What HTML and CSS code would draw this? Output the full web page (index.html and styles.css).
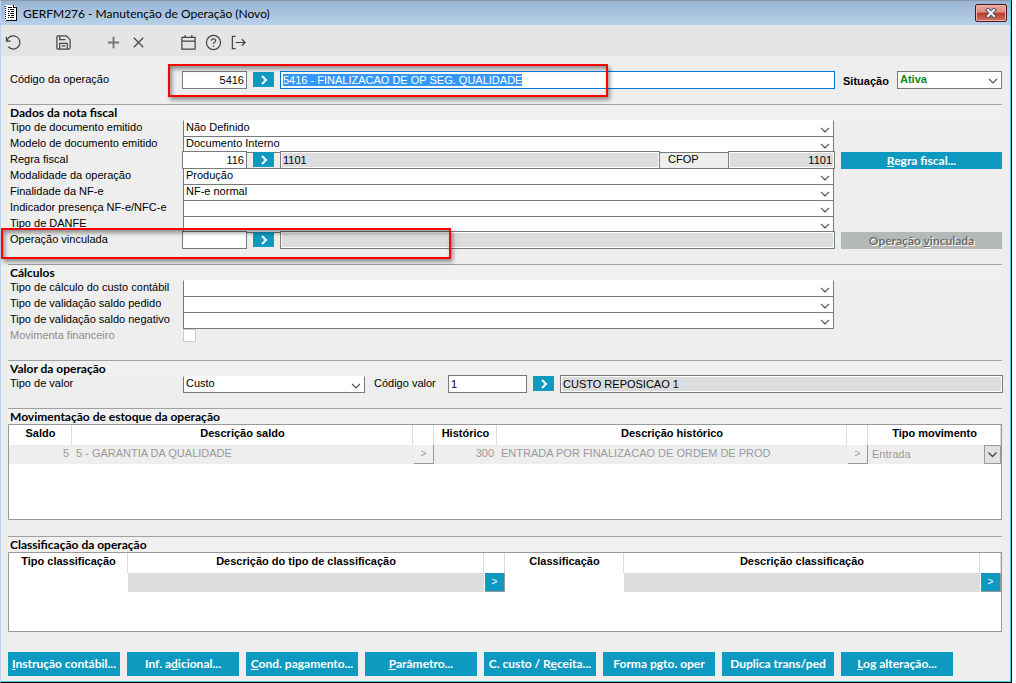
FILE: index.html
```html
<!DOCTYPE html>
<html lang="pt-BR">
<head>
    <meta charset="UTF-8">
    <meta name="viewport" content="width=device-width, initial-scale=1.0">
    <title>GERFM276 - Manutenção de Operação (Novo)</title>
    <link rel="stylesheet" href="styles.css">
</head>
<body>

    <div class="window">
        <header class="titlebar">
            <svg class="app-icon" width="12" height="16" viewBox="0 0 12 16" shape-rendering="crispEdges">
                <path fill="#fff" d="M0 0h9l2 2v13H0z"/>
                <path fill="none" stroke="#000" d="M8.500 0v2.500H11M11.500 2v13.500H1"/>
                <path stroke="#000" stroke-dasharray="1 1" d="M.5 1v14"/>
                <path stroke="#000" d="M3 2.500h4M3 4.500h1M5 4.500h4M3 6.500h2M6 6.500h3M3 8.500h1M5 8.500h4M3 10.500h2M6 10.500h3M3 12.500h1M5 12.500h4"/>
            </svg>
            <h1>GERFM276 - Manutenção de Operação (Novo)</h1>
            <button class="close" aria-label="Fechar">
                <svg width="12" height="10" viewBox="0 0 12 10">
                    <path d="M3 2l6 6M9 2l-6 6" stroke="#4a4f63" stroke-width="4" stroke-linecap="square"/>
                    <path d="M3 2l6 6M9 2l-6 6" stroke="#fff" stroke-width="2" stroke-linecap="square"/>
                </svg>
            </button>
        </header>

        <nav class="toolbar">
            <button aria-label="Desfazer"><svg viewBox="0 0 18 18"><path d="M1.500 3v4.500H6M2 7.200A7 7 0 1 1 3.500 13.500"/></svg></button>
            <button class="spaced" aria-label="Salvar"><svg viewBox="0 0 18 18"><path d="M2 3.500Q2 2 3.500 2H12l4 4v8.500q0 1.500-1.500 1.500h-11Q2 16 2 14.500zM5 2v4h6M5 16v-6h8v6M7 12.500h4"/></svg></button>
            <button class="spaced soft" aria-label="Incluir"><svg viewBox="0 0 18 18"><path d="M9 3v12M3 9h12"/></svg></button>
            <button aria-label="Excluir"><svg viewBox="0 0 18 18"><path d="M4 4l10 10M14 4L4 14"/></svg></button>
            <button class="spaced" aria-label="Agenda"><svg viewBox="0 0 18 18"><path d="M2 3.500h14v12.500H2zM2 7.500h14M5.500 1v2.500M12.500 1v2.500"/></svg></button>
            <button aria-label="Ajuda"><svg viewBox="0 0 18 18"><circle cx="9" cy="9" r="7.500"/><path d="M6.800 7.200C6.800 4.400 11.400 4.500 11.300 7.200C11.200 8.800 9 8.600 9 10.500M9 12.300v1.300"/></svg></button>
            <button aria-label="Sair"><svg viewBox="0 0 18 18"><path d="M6 2.500H2.500v13H6M6 9h10M12.500 5.500L16 9l-3.500 3.500"/></svg></button>
        </nav>

        <main>
            <div class="row head">
                <label for="codigo">Código da operação</label>
                <div class="fields">
                    <input class="code" id="codigo" value="5416">
                    <button class="go" aria-label="Buscar operação"><svg viewBox="0 0 8 10"><path d="M2 1l4 4-4 4"/></svg></button>
                    <input class="grow active" id="descricao" aria-label="Descrição da operação" value="5416 - FINALIZACAO DE OP SEG. QUALIDADE">
                </div>
                <div class="status">
                    <label for="situacao">Situação</label>
                    <select id="situacao"><option>Ativa</option></select>
                </div>
                <div class="marker marker-code"></div>
            </div>

            <section>
                <h2>Dados da nota fiscal</h2>
                <div class="row first">
                    <label for="tipoDoc">Tipo de documento emitido</label>
                    <select id="tipoDoc"><option>Não Definido</option></select>
                </div>
                <div class="row">
                    <label for="modelo">Modelo de documento emitido</label>
                    <select id="modelo"><option>Documento Interno</option></select>
                </div>
                <div class="row">
                    <label for="regra">Regra fiscal</label>
                    <div class="fields lined">
                        <input class="code" id="regra" value="116">
                        <button class="go" aria-label="Buscar regra"><svg viewBox="0 0 8 10"><path d="M2 1l4 4-4 4"/></svg></button>
                        <input class="grow" aria-label="Descrição da regra" value="1101" readonly>
                        <label class="cfop-label" for="cfop">CFOP</label>
                        <input class="cfop" id="cfop" value="1101" readonly>
                    </div>
                    <button class="action"><u>R</u>egra fiscal...</button>
                </div>
                <div class="row first">
                    <label for="modalidade">Modalidade da operação</label>
                    <select id="modalidade"><option>Produção</option></select>
                </div>
                <div class="row">
                    <label for="finalidade">Finalidade da NF-e</label>
                    <select id="finalidade"><option>NF-e normal</option></select>
                </div>
                <div class="row">
                    <label for="presenca">Indicador presença NF-e/NFC-e</label>
                    <select id="presenca"><option></option></select>
                </div>
                <div class="row">
                    <label for="danfe">Tipo de DANFE</label>
                    <select id="danfe"><option></option></select>
                </div>
                <div class="row">
                    <label for="vinculada">Operação vinculada</label>
                    <div class="fields">
                        <input class="code" id="vinculada">
                        <button class="go" aria-label="Buscar operação vinculada"><svg viewBox="0 0 8 10"><path d="M2 1l4 4-4 4"/></svg></button>
                        <input class="grow" aria-label="Descrição da operação vinculada" readonly>
                    </div>
                    <button class="action" disabled>Operação <u>v</u>inculada</button>
                    <div class="marker marker-linked"></div>
                </div>
            </section>

            <section>
                <h2>Cálculos</h2>
                <div class="row first">
                    <label for="custo">Tipo de cálculo do custo contábil</label>
                    <select id="custo"><option></option></select>
                </div>
                <div class="row">
                    <label for="pedido">Tipo de validação saldo pedido</label>
                    <select id="pedido"><option></option></select>
                </div>
                <div class="row">
                    <label for="negativo">Tipo de validação saldo negativo</label>
                    <select id="negativo"><option></option></select>
                </div>
                <div class="row">
                    <label class="off" for="financeiro">Movimenta financeiro</label>
                    <input type="checkbox" id="financeiro" disabled>
                </div>
            </section>

            <section>
                <h2>Valor da operação</h2>
                <div class="row first value">
                    <label for="tipoValor">Tipo de valor</label>
                    <select id="tipoValor"><option>Custo</option></select>
                    <label for="codigoValor">Código valor</label>
                    <div class="fields">
                        <input class="value-code" id="codigoValor" value="1">
                        <button class="go" aria-label="Buscar valor"><svg viewBox="0 0 8 10"><path d="M2 1l4 4-4 4"/></svg></button>
                        <input class="grow" aria-label="Descrição do valor" value="CUSTO REPOSICAO 1" readonly>
                    </div>
                </div>
            </section>

            <section>
                <h2>Movimentação de estoque da operação</h2>
                <div class="grid-box stock">
                    <table>
                        <colgroup><col class="c-num"><col class="c-desc"><col class="c-btn"><col class="c-num"><col><col class="c-btn"><col class="c-type"></colgroup>
                        <thead>
                            <tr><th>Saldo</th><th>Descrição saldo</th><th></th><th>Histórico</th><th>Descrição histórico</th><th></th><th>Tipo movimento</th></tr>
                        </thead>
                        <tbody>
                            <tr>
                                <td class="num">5</td>
                                <td>5 - GARANTIA DA QUALIDADE</td>
                                <td class="pick"><button disabled aria-label="Buscar saldo">&gt;</button></td>
                                <td class="num">300</td>
                                <td>ENTRADA POR FINALIZACAO DE ORDEM DE PROD</td>
                                <td class="pick"><button disabled aria-label="Buscar histórico">&gt;</button></td>
                                <td class="pick"><select disabled aria-label="Tipo movimento"><option>Entrada</option></select></td>
                            </tr>
                        </tbody>
                    </table>
                </div>
            </section>

            <section>
                <h2>Classificação da operação</h2>
                <div class="grid-box classes">
                    <table>
                        <colgroup><col class="c-class"><col><col class="c-btn"><col class="c-class"><col><col class="c-btn"></colgroup>
                        <thead>
                            <tr><th>Tipo classificação</th><th>Descrição do tipo de classificação</th><th></th><th>Classificação</th><th>Descrição classificação</th><th></th></tr>
                        </thead>
                        <tbody>
                            <tr>
                                <td></td>
                                <td class="locked"></td>
                                <td class="pick"><button aria-label="Buscar tipo de classificação">&gt;</button></td>
                                <td></td>
                                <td class="locked"></td>
                                <td class="pick"><button aria-label="Buscar classificação">&gt;</button></td>
                            </tr>
                        </tbody>
                    </table>
                </div>
            </section>

            <footer>
                <button class="action"><u>I</u>nstrução contábil...</button>
                <button class="action">Inf. a<u>d</u>icional...</button>
                <button class="action"><u>C</u>ond. pagamento...</button>
                <button class="action"><u>P</u>arâmetro...</button>
                <button class="action">C. custo / R<u>e</u>ceita...</button>
                <button class="action">Forma p<u>g</u>to. oper</button>
                <button class="action">Duplica trans/ped</button>
                <button class="action"><u>L</u>og alteração...</button>
            </footer>
        </main>
    </div>

    <script>
        // the description starts focused with its text selected
        const descricao = document.getElementById("descricao");
        descricao.focus();
        descricao.select();
    </script>

</body>
</html>
```
FILE: styles.css
```css
* { box-sizing: border-box; }
body {
    margin: 0;
    padding-right: 4px;
    background: #fff;
    color: #000;
    font: 11px/16px "Liberation Sans", Arial, sans-serif;
}
button, input, select {
    margin: 0;
    font: inherit;
    color: inherit;
    border-radius: 0;
    outline: none;
}
.window {
    display: flex;
    flex-direction: column;
    min-height: 100vh;
    background: #eee;
    border: 1px solid #000;
    border-left-color: #b9d1f0;
    border-top-color: #8d99a8;
    box-shadow: inset -1px -1px #4cc8f0;
}

/* title bar */
.titlebar {
    display: flex;
    align-items: center;
    gap: 6px;
    height: 24px;
    margin-right: 1px;
    padding: 0 3px 0 4px;
    background: linear-gradient(#98b4d2, #b9d1ea);
}
.titlebar h1 {
    flex: 1;
    margin: 0;
    padding-top: 1px;
    font: 12px/16px Lato, "Open Sans", sans-serif;
}
.close {
    display: flex;
    align-items: center;
    justify-content: center;
    width: 32px;
    height: 18px;
    padding: 0;
    border: 1px solid #4a1520;
    border-radius: 2px;
    background: linear-gradient(#e8a79c 0%, #dc8f83 45%, #b93a26 50%, #d2715d 100%);
    box-shadow: inset 0 0 0 1px #e9b5ab;
}

.toolbar {
    display: flex;
    height: 31px;
    padding-top: 5px;
    margin-right: 1px;
    background: #e5e5e5;
}
.toolbar button {
    width: 25px;
    height: 25px;
    padding: 4px;
    border: 0;
    background: none;
}
.toolbar .spaced { margin-left: 25px; }
.toolbar svg {
    display: block;
    width: 17px;
    height: 17px;
    fill: none;
    stroke: #444;
    stroke-width: 1.3;
}
.toolbar .soft svg { stroke: #777; stroke-width: 2; }

main { padding: 16px 9px 6px 7px; }

/* form rows: label, field, side button */
.row {
    position: relative;
    display: grid;
    grid-template-columns: 175px 1fr 161px;
    height: 16px;
}
.row > label { padding-left: 2px; line-height: 15px; }
.row > select, .row > .fields { margin-right: 7px; }
.head { height: 32px; }
.off { color: #8d8d8d; }

select {
    height: 17px;
    padding: 0 20px 3px 2px;
    border: 1px solid #7a7a7a;
    appearance: none;
    background: #fff url("data:image/svg+xml,%3Csvg xmlns='http://www.w3.org/2000/svg' width='10' height='6'%3E%3Cpath d='M1 1l4 4 4-4' fill='none' stroke='%23555' stroke-width='1.2'/%3E%3C/svg%3E") no-repeat right 3px top 6px;
    line-height: 12px;
}
.first select { border-top-color: #fff; }
.fields {
    display: flex;
    align-items: flex-start;
    min-width: 0;
}
.fields input {
    height: 18px;
    margin-top: -1px;
    padding: 1px 2px;
    border: 1px solid #7a7a7a;
    background: #fff;
}
.fields input[readonly] {
    background: #dcdcdc;
    box-shadow: inset 0 0 0 1px #fff;
}
.fields .code {
    width: 65px;
    margin-left: -1px;
    text-align: right;
}
.fields .grow {
    flex: 1;
    min-width: 0;
    margin-right: -1px;
}
.fields .active { border-color: #0078d7; }
.active::selection { background: #3399ff; color: #fff; }
.lined { box-shadow: inset 0 1px #7a7a7a, inset 0 -1px #7a7a7a; }
.fields .cfop-label { width: 69px; padding-left: 9px; line-height: 15px; }
.fields .cfop {
    width: 107px;
    margin-right: -1px;
    text-align: right;
}
/* fields that overlap the row below */
.row:has(.lined), .row:has(.marker) { z-index: 1; }
.go {
    width: 21px;
    height: 15px;
    margin: 0 6px;
    padding: 0;
    border: 0;
    background: #0e9ac0;
}
.go svg {
    display: block;
    width: 8px;
    height: 10px;
    margin: 1px auto 0;
    fill: none;
    stroke: #fff;
    stroke-width: 2;
}
.status {
    display: flex;
    margin-top: -1px;
    padding-left: 2px;
    font-weight: bold;
}
.status label { width: 54px; line-height: 20px; }
.status select {
    flex: 1;
    height: 18px;
    color: #0a8a1e;
}

/* sections */
section {
    border-top: 1px solid #a0a0a0;
    padding-bottom: 16px;
}
h2 {
    height: 15px;
    margin: 0;
    padding-left: 2px;
    background: #f0f0f0;
    font: bold 12px/16px Lato, "Open Sans", sans-serif;
}
input[type="checkbox"] {
    width: 13px;
    height: 13px;
    margin-top: 1px;
    border: 1px solid #ccc;
    background: #fff;
    appearance: none;
}
.value { grid-template-columns: 175px 182px 83px 1fr; }
.value > select { margin-right: 0; }
.value > select + label { padding-left: 9px; }
.value > .fields { margin-right: 0; }
.value-code { width: 79px; }

/* tables */
.grid-box {
    border: 1px solid #999;
    background: #fff;
}
.stock { height: 96px; }
.classes { height: 80px; }
table {
    width: 100%;
    table-layout: fixed;
    border-collapse: collapse;
}
.c-num { width: 63px; }
.c-desc { width: 341px; }
.c-btn { width: 21px; }
.c-type { width: 133px; }
.c-class { width: 119px; }
th {
    height: 20px;
    padding: 0 0 4px;
    box-shadow: inset -1px 0 #ddd;
    line-height: 16px;
}
td {
    height: 19px;
    padding: 0 3px 3px 4px;
    line-height: 16px;
}
.stock td { background: #eee; color: #9a9a9a; }
.num { text-align: right; }
.locked { background: #dcdcdc; }
td.pick { padding: 0; }
.pick button {
    display: block;
    width: 20px;
    height: 19px;
    margin-left: 1px;
    padding: 0;
    border: solid #999;
    border-width: 0 1px 1px 0;
    background: #0e9ac0;
    color: #fff;
    font-size: 10px;
}
.pick button:disabled { background: #f0f0f0; color: #999; }
.pick select {
    display: block;
    width: 100%;
    height: 19px;
    padding: 0 20px 1px 4px;
    border: 0;
    background:
        url("data:image/svg+xml,%3Csvg xmlns='http://www.w3.org/2000/svg' width='17' height='19'%3E%3Cpath d='M.5.5h16v18H.5z' fill='%23e1e1e1' stroke='%23999'/%3E%3Cpath d='M4.500 7.500l4 4 4-4' fill='none' stroke='%23444' stroke-width='1.3'/%3E%3C/svg%3E") no-repeat right top,
        #eee;
    opacity: 1;
}

.action {
    padding: 0 0 1px;
    border: 0;
    background: #0e9ac0;
    color: #fff;
    font: bold 12px/15px Lato, "Open Sans", sans-serif;
    white-space: nowrap;
}
.action:disabled {
    background: #b3b9b9;
    color: #6d6d6d;
    text-shadow: 1px 1px #fff;
}
footer {
    display: flex;
    flex-wrap: wrap;
    gap: 7px;
    padding-top: 4px;
}
footer .action { width: 112px; height: 24px; }

/* red highlight frames over the form */
.marker {
    position: absolute;
    border: 2px solid #f00;
    box-shadow: 2px 3px 4px #0006, inset 2px 3px 4px #0006;
    pointer-events: none;
}
.marker-code {
    top: -8px;
    left: 160px;
    width: 440px;
    height: 33px;
}
.marker-linked {
    top: -4px;
    left: -7px;
    width: 450px;
    height: 31px;
}
```
